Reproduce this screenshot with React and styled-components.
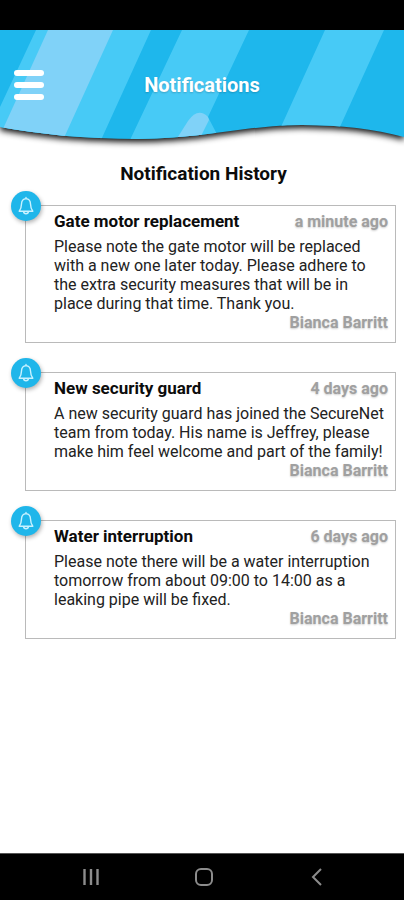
import React from "react";
import styled, { createGlobalStyle } from "styled-components";

const GlobalStyle = createGlobalStyle`
  * { box-sizing: border-box; }
  body {
    margin: 0;
    background: #fff;
    color: #111;
    font-family: Roboto, sans-serif;
  }
`;

const Screen = styled.div`
  display: flex;
  flex-direction: column;
  min-height: 100vh;
`;

const StatusBar = styled.div`
  height: 30px;
  background: #000;
`;

const Header = styled.header`
  position: relative;
  display: grid;
  grid-template-columns: 30px 1fr 30px;
  align-items: center;
  height: 110px;
  padding: 0 14px;
`;

const HeaderArt = styled.svg`
  position: absolute;
  inset: 0;
  width: 100%;
  height: 100%;
  overflow: visible;
  z-index: -1;
  filter: drop-shadow(0 3px 3px rgba(0, 0, 0, 0.95));
`;

const MenuButton = styled.button`
  display: flex;
  flex-direction: column;
  gap: 6px;
  width: 30px;
  padding: 0;
  border: 0;
  background: none;
`;

const MenuBar = styled.span`
  height: 6px;
  border-radius: 3px;
  background: #fff;
`;

const PageTitle = styled.h1`
  margin: 0;
  color: #fff;
  font-size: 20px;
  line-height: 24px;
  font-weight: 700;
  text-align: center;
  text-shadow: 0 1px 2px rgba(0, 0, 0, 0.2);
`;

const Main = styled.main`
  flex: 1;
  padding: 22px 8px 24px 25px;
`;

const SectionTitle = styled.h2`
  margin: 0 14px 19px 0;
  font-size: 19px;
  line-height: 24px;
  font-weight: 700;
  text-align: center;
  color: #0c0c0c;
`;

const List = styled.div`
  display: flex;
  flex-direction: column;
  gap: 29px;
`;

const Card = styled.article`
  position: relative;
  padding: 5px 7px 10px 28px;
  border: 1px solid #bababa;
`;

const Badge = styled.span`
  position: absolute;
  top: -15px;
  left: -15px;
  display: grid;
  place-items: center;
  width: 30px;
  height: 30px;
  border-radius: 50%;
  background: #1fb6ea;
  box-shadow: 1px 2px 4px rgba(0, 0, 0, 0.3);
`;

const CardHead = styled.div`
  display: flex;
  justify-content: space-between;
  align-items: baseline;
  margin-bottom: 6px;
`;

const CardTitle = styled.h3`
  margin: 0;
  font-size: 17px;
  line-height: 20px;
  font-weight: 700;
  color: #0c0c0c;
`;

const Meta = styled.span`
  font-size: 16px;
  line-height: 19px;
  font-weight: 700;
  color: #a0a0a0;
  text-shadow: 0 1px 2px rgba(0, 0, 0, 0.2);
`;

const Message = styled.p`
  margin: 0;
  font-size: 16px;
  line-height: 19px;
  color: #222;
`;

const Author = styled(Meta)`
  display: block;
  text-align: right;
`;

const NavBar = styled.nav`
  display: flex;
  justify-content: space-around;
  align-items: center;
  height: 47px;
  padding: 0 31px 0 34px;
  border-top: 1px solid #555;
  background: #000;
`;

const NavButton = styled.button`
  display: grid;
  place-items: center;
  width: 40px;
  height: 40px;
  padding: 0;
  border: 0;
  background: none;
  color: #8c8c8c;
`;

const notifications = [
  {
    title: "Gate motor replacement",
    time: "a minute ago",
    text: "Please note the gate motor will be replaced with a new one later today. Please adhere to the extra security measures that will be in place during that time. Thank you.",
    author: "Bianca Barritt",
  },
  {
    title: "New security guard",
    time: "4 days ago",
    text: "A new security guard has joined the SecureNet team from today. His name is Jeffrey, please make him feel welcome and part of the family!",
    author: "Bianca Barritt",
  },
  {
    title: "Water interruption",
    time: "6 days ago",
    text: "Please note there will be a water interruption tomorrow from about 09:00 to 14:00 as a leaking pipe will be fixed.",
    author: "Bianca Barritt",
  },
];

const WAVE =
  "M0 0H404V107C374 99 342 95 302 95C248 95 202 109 138 109C84 109 38 104 0 97Z";

function Backdrop() {
  return (
    <HeaderArt viewBox="0 0 404 110" preserveAspectRatio="none" aria-hidden="true">
      <defs>
        <clipPath id="wave">
          <path d={WAVE} />
        </clipPath>
      </defs>
      <g clipPath="url(#wave)">
        <path d="M0 0H404V110H0Z" fill="#1eb7ec" />
        <path d="M36 0H151L101 110H0V77Z" fill="#47caf6" />
        <path d="M48 0H113L63 110H-2Z" fill="#80d2f8" />
        <path d="M182 0H249L208 87L220 110H130Z" fill="#47caf6" />
        <path d="M176 110L188 91Q198 77 208 87L209 90L198 112Z" fill="#80d2f8" />
        <path d="M325 0H384L334 110H275Z" fill="#47caf6" />
      </g>
    </HeaderArt>
  );
}

function BellIcon() {
  return (
    <svg width="18" height="20" viewBox="0 0 18 20" fill="none" stroke="#c9f2ff" strokeWidth="1.4" strokeLinecap="round" strokeLinejoin="round" aria-hidden="true">
      <path d="M9 1.4V2.6M9 2.6C6 2.9 4.6 5 4.5 8C4.4 11.5 4 13 2.2 15.2H15.8C14 13 13.6 11.5 13.5 8C13.4 5 12 2.9 9 2.6Z" />
      <path d="M6.6 15.6C6.8 18.4 11.2 18.4 11.4 15.6" />
    </svg>
  );
}

function Notification({ title, time, text, author }) {
  return (
    <Card>
      <Badge>
        <BellIcon />
      </Badge>
      <CardHead>
        <CardTitle>{title}</CardTitle>
        <Meta>{time}</Meta>
      </CardHead>
      <Message>{text}</Message>
      <Author>{author}</Author>
    </Card>
  );
}

export default function App() {
  return (
    <Screen>
      <GlobalStyle />
      <StatusBar />
      <Header>
        <Backdrop />
        <MenuButton type="button" aria-label="Menu">
          <MenuBar />
          <MenuBar />
          <MenuBar />
        </MenuButton>
        <PageTitle>Notifications</PageTitle>
      </Header>
      <Main>
        <SectionTitle>Notification History</SectionTitle>
        <List>
          {notifications.map((item) => (
            <Notification key={item.title} {...item} />
          ))}
        </List>
      </Main>
      <NavBar>
        <NavButton type="button" aria-label="Recent apps">
          <svg width="18" height="18" viewBox="0 0 18 18" stroke="currentColor" strokeWidth="2.4">
            <path d="M2.5 1V17M9 1V17M15.5 1V17" />
          </svg>
        </NavButton>
        <NavButton type="button" aria-label="Home">
          <svg width="18" height="18" viewBox="0 0 18 18" fill="none" stroke="currentColor" strokeWidth="2">
            <rect x="1" y="1" width="16" height="16" rx="5" />
          </svg>
        </NavButton>
        <NavButton type="button" aria-label="Back">
          <svg width="18" height="18" viewBox="0 0 18 18" fill="none" stroke="currentColor" strokeWidth="2">
            <path d="M13 1L5 9L13 17" />
          </svg>
        </NavButton>
      </NavBar>
    </Screen>
  );
}
